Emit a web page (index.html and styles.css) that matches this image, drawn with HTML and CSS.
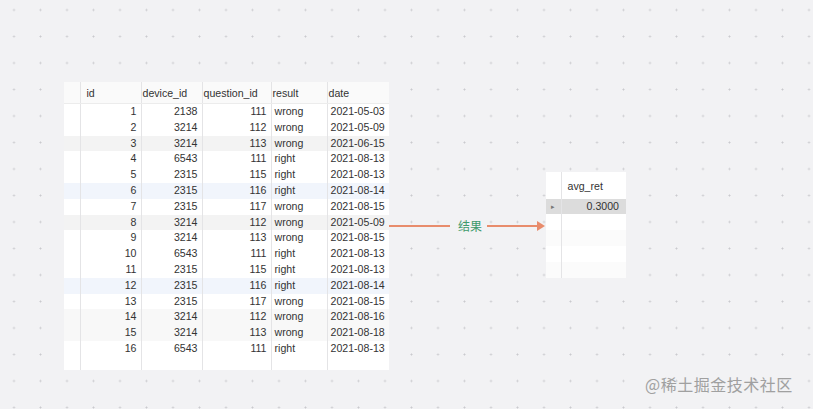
FILE: index.html
```html
<!DOCTYPE html>
<html lang="zh">
<head>
<meta charset="utf-8">
<title>结果</title>
<link rel="stylesheet" href="styles.css">
</head>
<body>
<div class="canvas">
  <table class="grid src">
    <colgroup>
      <col class="c-g"><col class="c-id"><col class="c-dev"><col class="c-q"><col class="c-res"><col class="c-date">
    </colgroup>
    <thead>
      <tr><th></th><th class="h-id">id</th><th>device_id</th><th>question_id</th><th>result</th><th>date</th></tr>
    </thead>
    <tbody>
      <tr><td></td><td class="n">1</td><td class="n">2138</td><td class="n">111</td><td>wrong</td><td>2021-05-03</td></tr>
      <tr><td></td><td class="n">2</td><td class="n">3214</td><td class="n">112</td><td>wrong</td><td>2021-05-09</td></tr>
      <tr class="gray"><td></td><td class="n">3</td><td class="n">3214</td><td class="n">113</td><td>wrong</td><td>2021-06-15</td></tr>
      <tr><td></td><td class="n">4</td><td class="n">6543</td><td class="n">111</td><td>right</td><td>2021-08-13</td></tr>
      <tr><td></td><td class="n">5</td><td class="n">2315</td><td class="n">115</td><td>right</td><td>2021-08-13</td></tr>
      <tr class="blue"><td></td><td class="n">6</td><td class="n">2315</td><td class="n">116</td><td>right</td><td>2021-08-14</td></tr>
      <tr><td></td><td class="n">7</td><td class="n">2315</td><td class="n">117</td><td>wrong</td><td>2021-08-15</td></tr>
      <tr class="gray"><td></td><td class="n">8</td><td class="n">3214</td><td class="n">112</td><td>wrong</td><td>2021-05-09</td></tr>
      <tr><td></td><td class="n">9</td><td class="n">3214</td><td class="n">113</td><td>wrong</td><td>2021-08-15</td></tr>
      <tr><td></td><td class="n">10</td><td class="n">6543</td><td class="n">111</td><td>right</td><td>2021-08-13</td></tr>
      <tr><td></td><td class="n">11</td><td class="n">2315</td><td class="n">115</td><td>right</td><td>2021-08-13</td></tr>
      <tr class="blue"><td></td><td class="n">12</td><td class="n">2315</td><td class="n">116</td><td>right</td><td>2021-08-14</td></tr>
      <tr><td></td><td class="n">13</td><td class="n">2315</td><td class="n">117</td><td>wrong</td><td>2021-08-15</td></tr>
      <tr class="faint"><td></td><td class="n">14</td><td class="n">3214</td><td class="n">112</td><td>wrong</td><td>2021-08-16</td></tr>
      <tr class="faint"><td></td><td class="n">15</td><td class="n">3214</td><td class="n">113</td><td>wrong</td><td>2021-08-18</td></tr>
      <tr><td></td><td class="n">16</td><td class="n">6543</td><td class="n">111</td><td>right</td><td>2021-08-13</td></tr>
      <tr class="filler"><td></td><td></td><td></td><td></td><td></td><td></td></tr>
    </tbody>
  </table>

  <div class="connector">
    <span class="line first"></span>
    <span class="label">结果</span>
    <span class="line second"></span>
    <span class="head"></span>
  </div>

  <table class="grid out">
    <colgroup><col class="o-g"><col class="o-v"></colgroup>
    <thead>
      <tr><th></th><th>avg_ret</th></tr>
    </thead>
    <tbody>
      <tr class="sel"><td class="mark">&#9656;</td><td class="n">0.3000</td></tr>
      <tr class="empty"><td></td><td></td></tr>
      <tr class="empty alt"><td></td><td></td></tr>
      <tr class="empty"><td></td><td></td></tr>
      <tr class="empty alt"><td></td><td></td></tr>
    </tbody>
  </table>
</div>
<div class="watermark">@稀土掘金技术社区</div>
</body>
</html>
```

FILE: styles.css
```css
html, body {
  margin: 0;
  padding: 0;
}
body {
  width: 813px;
  height: 409px;
  overflow: hidden;
  position: relative;
  background-color: #f2f2f4;
  background-image: radial-gradient(circle, #cacace 0.8px, transparent 1.2px);
  background-size: 26.5px 26.5px;
  background-position: 0.75px -3.25px;
  font-family: "Liberation Sans", Arial, sans-serif;
  color: #333;
}
.canvas {
  display: flex;
  align-items: flex-start;
  padding: 82px 0 0 64px;
}
.grid {
  border-collapse: collapse;
  table-layout: fixed;
  background: #fff;
  font-size: 10.6px;
  flex-shrink: 0;
}
.grid th, .grid td {
  padding: 0 4px 0 3px;
  white-space: nowrap;
  overflow: hidden;
  border-left: 1px solid #e4e4e6;
}
.grid th:first-child, .grid td:first-child {
  border-left: none;
}
.grid th {
  height: 21px;
  font-weight: normal;
  text-align: left;
  padding-left: 1px;
  background: #fafafa;
  border-bottom: 1px solid #ececec;
  color: #333;
}
.grid th.h-id {
  padding-left: 6px;
}
.src {
  width: 325px;
}
.c-g { width: 16px; }
.c-id { width: 61px; }
.c-dev { width: 61px; }
.c-q { width: 69px; }
.c-res { width: 56px; }
.c-date { width: 62px; }
.src td {
  height: 15.8px;
  line-height: 15.8px;
  padding-top: 0;
  padding-bottom: 0;
}
.src td.n {
  text-align: right;
  padding-right: 4px;
}
.src tr.gray td { background: #f3f3f3; }
.src tr.blue td { background: #f1f5fc; }
.src tr.faint td { background: #f8f8f8; }
.src tr.filler td {
  height: 13px;
}
.connector {
  display: flex;
  align-items: center;
  flex-shrink: 0;
  width: 157px;
  height: 16px;
  margin-top: 136px;
  white-space: nowrap;
}
.line {
  display: block;
  flex-shrink: 0;
  height: 1.5px;
  background: #e88c6c;
}
.line.first {
  width: 61px;
}
.line.second {
  width: 50px;
}
.label {
  flex-shrink: 0;
  font-family: "Noto Sans CJK SC", sans-serif;
  font-size: 12px;
  line-height: 16px;
  color: #3e9a6c;
  margin: 0 5px 0 8px;
}
.head {
  flex-shrink: 0;
  width: 0;
  height: 0;
  border-top: 5px solid transparent;
  border-bottom: 5px solid transparent;
  border-left: 8px solid #e88c6c;
}
.out {
  width: 80px;
  margin-top: 90px;
}
.o-g { width: 15px; }
.o-v { width: 65px; }
.out th {
  height: 27px;
  padding-left: 6px;
  background: #fff;
  border-bottom: none;
}
.out td {
  height: 15px;
  line-height: 15px;
}
.out td.n {
  text-align: right;
  padding-right: 7px;
}
.out tr.sel td {
  background: #dcdcdc;
}
.out td.mark {
  font-size: 7px;
  color: #777;
  text-align: center;
  padding: 0;
}
.out tr.empty td {
  height: 16px;
}
.out tr.alt td {
  background: #fbfbfb;
}
.watermark {
  position: absolute;
  left: 645px;
  top: 372px;
  font-family: "Noto Sans CJK SC", sans-serif;
  font-size: 16px;
  color: #a0a0a0;
  letter-spacing: 0.5px;
}
```
